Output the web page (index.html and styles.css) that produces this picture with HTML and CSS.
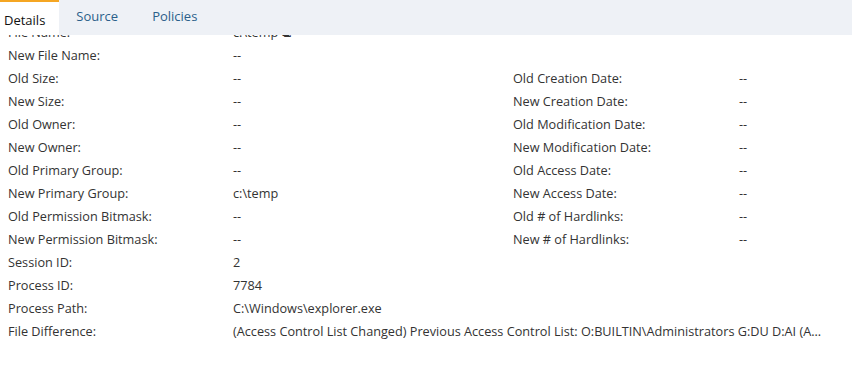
FILE: index.html
```
<!DOCTYPE html>
<html lang="en">
  <head>
    <meta charset="UTF-8" />
    <meta name="viewport" content="width=device-width, initial-scale=1.0" />
    <title>Event Details</title>
    <link rel="stylesheet" href="styles.css">
  </head>
  <body>
    <nav class="tabs">
      <a class="tab active">Details</a>
      <a class="tab">Source</a>
      <a class="tab">Policies</a>
    </nav>

    <div class="content" id="content">
      <div class="grid">
        <span class="label">File Name:</span><span class="value">c:\temp ⧉</span><span></span><span></span>
        <span class="label">New File Name:</span><span class="value">--</span><span></span><span></span>
        <span class="label">Old Size:</span><span class="value">--</span><span class="label">Old Creation Date:</span><span class="value">--</span>
        <span class="label">New Size:</span><span class="value">--</span><span class="label">New Creation Date:</span><span class="value">--</span>
        <span class="label">Old Owner:</span><span class="value">--</span><span class="label">Old Modification Date:</span><span class="value">--</span>
        <span class="label">New Owner:</span><span class="value">--</span><span class="label">New Modification Date:</span><span class="value">--</span>
        <span class="label">Old Primary Group:</span><span class="value">--</span><span class="label">Old Access Date:</span><span class="value">--</span>
        <span class="label">New Primary Group:</span><span class="value">c:\temp</span><span class="label">New Access Date:</span><span class="value">--</span>
        <span class="label">Old Permission Bitmask:</span><span class="value">--</span><span class="label">Old # of Hardlinks:</span><span class="value">--</span>
        <span class="label">New Permission Bitmask:</span><span class="value">--</span><span class="label">New # of Hardlinks:</span><span class="value">--</span>
        <span class="label">Session ID:</span><span class="value">2</span><span></span><span></span>
        <span class="label">Process ID:</span><span class="value">7784</span><span></span><span></span>
        <span class="label">Process Path:</span><span class="value">C:\Windows\explorer.exe</span><span></span><span></span>
        <span class="label">File Difference:</span><span class="value wide">(Access Control List Changed) Previous Access Control List: O:BUILTIN\Administrators G:DU D:AI (A...</span>
      </div>
    </div>
    <script>
      // the panel is scrolled a little, first row sits under the tabs
      document.getElementById("content").scrollTop = 15;
    </script>
  </body>
</html>
```

FILE: styles.css
```
body {
  font-family: "Open Sans", "Liberation Sans", sans-serif;
  margin: 0;
  padding: 0;
  background-color: #fff;
  color: #333;
  font-size: 12.7px;
  height: 100vh;
  display: flex;
  flex-direction: column;
  overflow: hidden;
}

.tabs {
  display: flex;
  height: 35px;
  background-color: #eef1f6;
  flex-shrink: 0;
}

.tab {
  padding: 7px 17px 0;
  color: #2b5f8a;
  font-size: 13px;
  box-sizing: border-box;
}

.tab.active {
  background-color: #fff;
  color: #111;
  border-top: 2px solid #f5a623;
  padding: 9px 14px 0 4px;
}

.content {
  flex: 1;
  min-height: 0;
  overflow: hidden;
}

.grid {
  display: grid;
  grid-template-columns: 225px 280px 226px 1fr;
  grid-auto-rows: 23px;
  align-items: center;
  padding: 0 0 60px 8px;
}

.label,
.value {
  white-space: nowrap;
}

.wide {
  grid-column: span 3;
}
```
